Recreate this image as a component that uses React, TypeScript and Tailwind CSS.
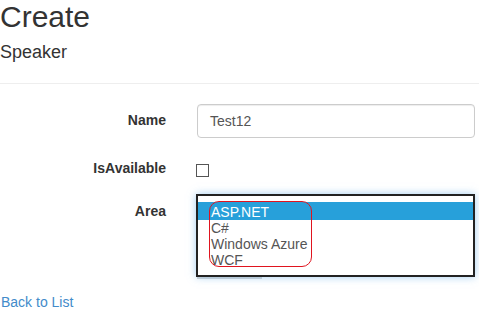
import React from "react";

export default function App() {
  const options = ["ASP.NET", "C#", "Windows Azure", "WCF"];
  return (
    <div className="w-[479px] h-[313px] overflow-hidden bg-white text-[#333] font-['Liberation_Sans',Arial,sans-serif] text-[14px] leading-[20px]">
      <h2 className="m-0 text-[30px] leading-[33px] font-normal">Create</h2>
      <h4 className="mt-[10px] text-[18px] leading-[19.8px] font-normal">Speaker</h4>
      <hr className="mt-[20px] border-0 border-t border-[#eee]" />

      <div className="mt-[20px] flex">
        <label className="w-[166px] text-right font-bold pt-[6px] leading-[20px]">Name</label>
        <div className="ml-[31px] w-[278px] h-[34px] border border-[#ccc] rounded-[4px] px-[12px] py-[6px] text-[#555] shadow-[inset_0_1px_1px_rgba(0,0,0,0.075)]">
          Test12
        </div>
      </div>

      <div className="mt-[15px] flex h-[26px]">
        <label className="w-[166px] text-right font-bold pt-[5px] leading-[20px]">IsAvailable</label>
        <div className="ml-[30px] mt-[11px] w-[13px] h-[13px] border border-[#555] bg-white" />
      </div>

      <div className="mt-[15px] flex">
        <label className="w-[166px] text-right font-bold pt-[7px] leading-[20px]">Area</label>
        <div className="ml-[30px] flex flex-col">
          <div className="relative w-[279px] h-[83px] border-2 border-[#222] pt-[6px] shadow-[0_0_8px_rgba(102,175,233,0.6)] bg-white">
            {options.map((o, i) =>
              i === 0 ? (
                <div key={o} className="h-[18px] pt-[2px] pl-[13px] leading-[16px] bg-[#27a0da] text-white">
                  {o}
                </div>
              ) : (
                <div key={o} className="h-[16px] pl-[13px] leading-[16px] text-[#555]">
                  {o}
                </div>
              )
            )}
            <div className="absolute left-[11px] top-[5px] w-[103px] h-[66px] border border-[#e0141f] rounded-[10px]" />
          </div>
          <div className="ml-[1px] w-[65px] h-[2px] bg-[#d4d4d4]" />
        </div>
      </div>

      <div className="mt-[13px] pl-[1px]">
        <a className="text-[#428bca] no-underline" href="#">Back to List</a>
      </div>
    </div>
  );
}
